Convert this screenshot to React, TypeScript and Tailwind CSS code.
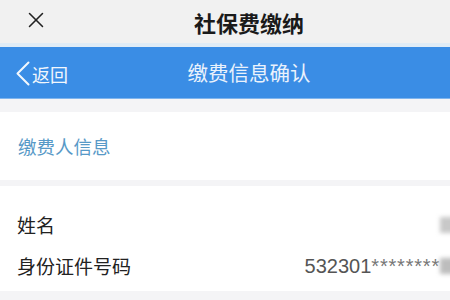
import { X } from 'lucide-react'

const font = { fontFamily: '"Noto Sans CJK SC", "Liberation Sans", sans-serif' }

function InfoRow({ label, children }: { label: string; children: React.ReactNode }) {
  return (
    <div className="flex h-[41px] items-center justify-between pl-[17px]">
      <span className="text-[19px] leading-none text-[#222]">{label}</span>
      {children}
    </div>
  )
}

export default function App() {
  return (
    <div className="h-[300px] w-[450px] overflow-hidden bg-[#f4f4f6]" style={font}>
      <header className="relative flex h-[43px] items-center justify-center bg-[#f1f1f1] pl-[48px]">
        <X className="absolute left-[23px] top-[7px] h-[26px] w-[26px] text-[#222]" strokeWidth={1.4} />
        <h1 className="text-[22px] font-bold leading-none text-[#1a1a1a]">社保费缴纳</h1>
      </header>
      <div className="h-[4px] bg-[#e0ecf6]" />
      <nav className="relative flex h-[52px] items-center justify-center border-b border-[#7fb5ee] bg-[#3a8de5] pl-[48px]">
        <div className="absolute left-[16px] top-[14px] flex items-center gap-[2px] text-[#f2f7fd]">
          <svg width="14" height="25" viewBox="0 0 14 25" fill="none" stroke="currentColor" strokeWidth="2" strokeLinecap="round" strokeLinejoin="round">
            <polyline points="12.5,1.5 1.5,12.5 12.5,23.5" />
          </svg>
          <span className="text-[18px] leading-none">返回</span>
        </div>
        <h2 className="text-[20.5px] leading-none text-[#eaf2fc]">缴费信息确认</h2>
      </nav>
      <div className="mt-[13px] flex h-[68px] items-center bg-white pl-[18px]">
        <span className="text-[18.5px] leading-none text-[#5799c7]">缴费人信息</span>
      </div>
      <div className="mt-[6px] flex h-[105px] flex-col bg-white pt-[18px]">
        <InfoRow label="姓名">
          <span className="mr-[-6px] h-[16px] w-[16px] bg-[#c8c8c8] blur-[2px]" />
        </InfoRow>
        <InfoRow label="身份证件号码">
          <div className="flex items-center">
            <span className="text-[20px] leading-none text-[#555]" style={{ fontFamily: '"Liberation Sans", sans-serif' }}>
              532301<span className="tracking-[0.8px] text-[#777]">********</span>
            </span>
            <span className="mr-[-8px] h-[16px] w-[18px] bg-[#bdbdbd] blur-[2px]" />
          </div>
        </InfoRow>
      </div>
    </div>
  )
}
